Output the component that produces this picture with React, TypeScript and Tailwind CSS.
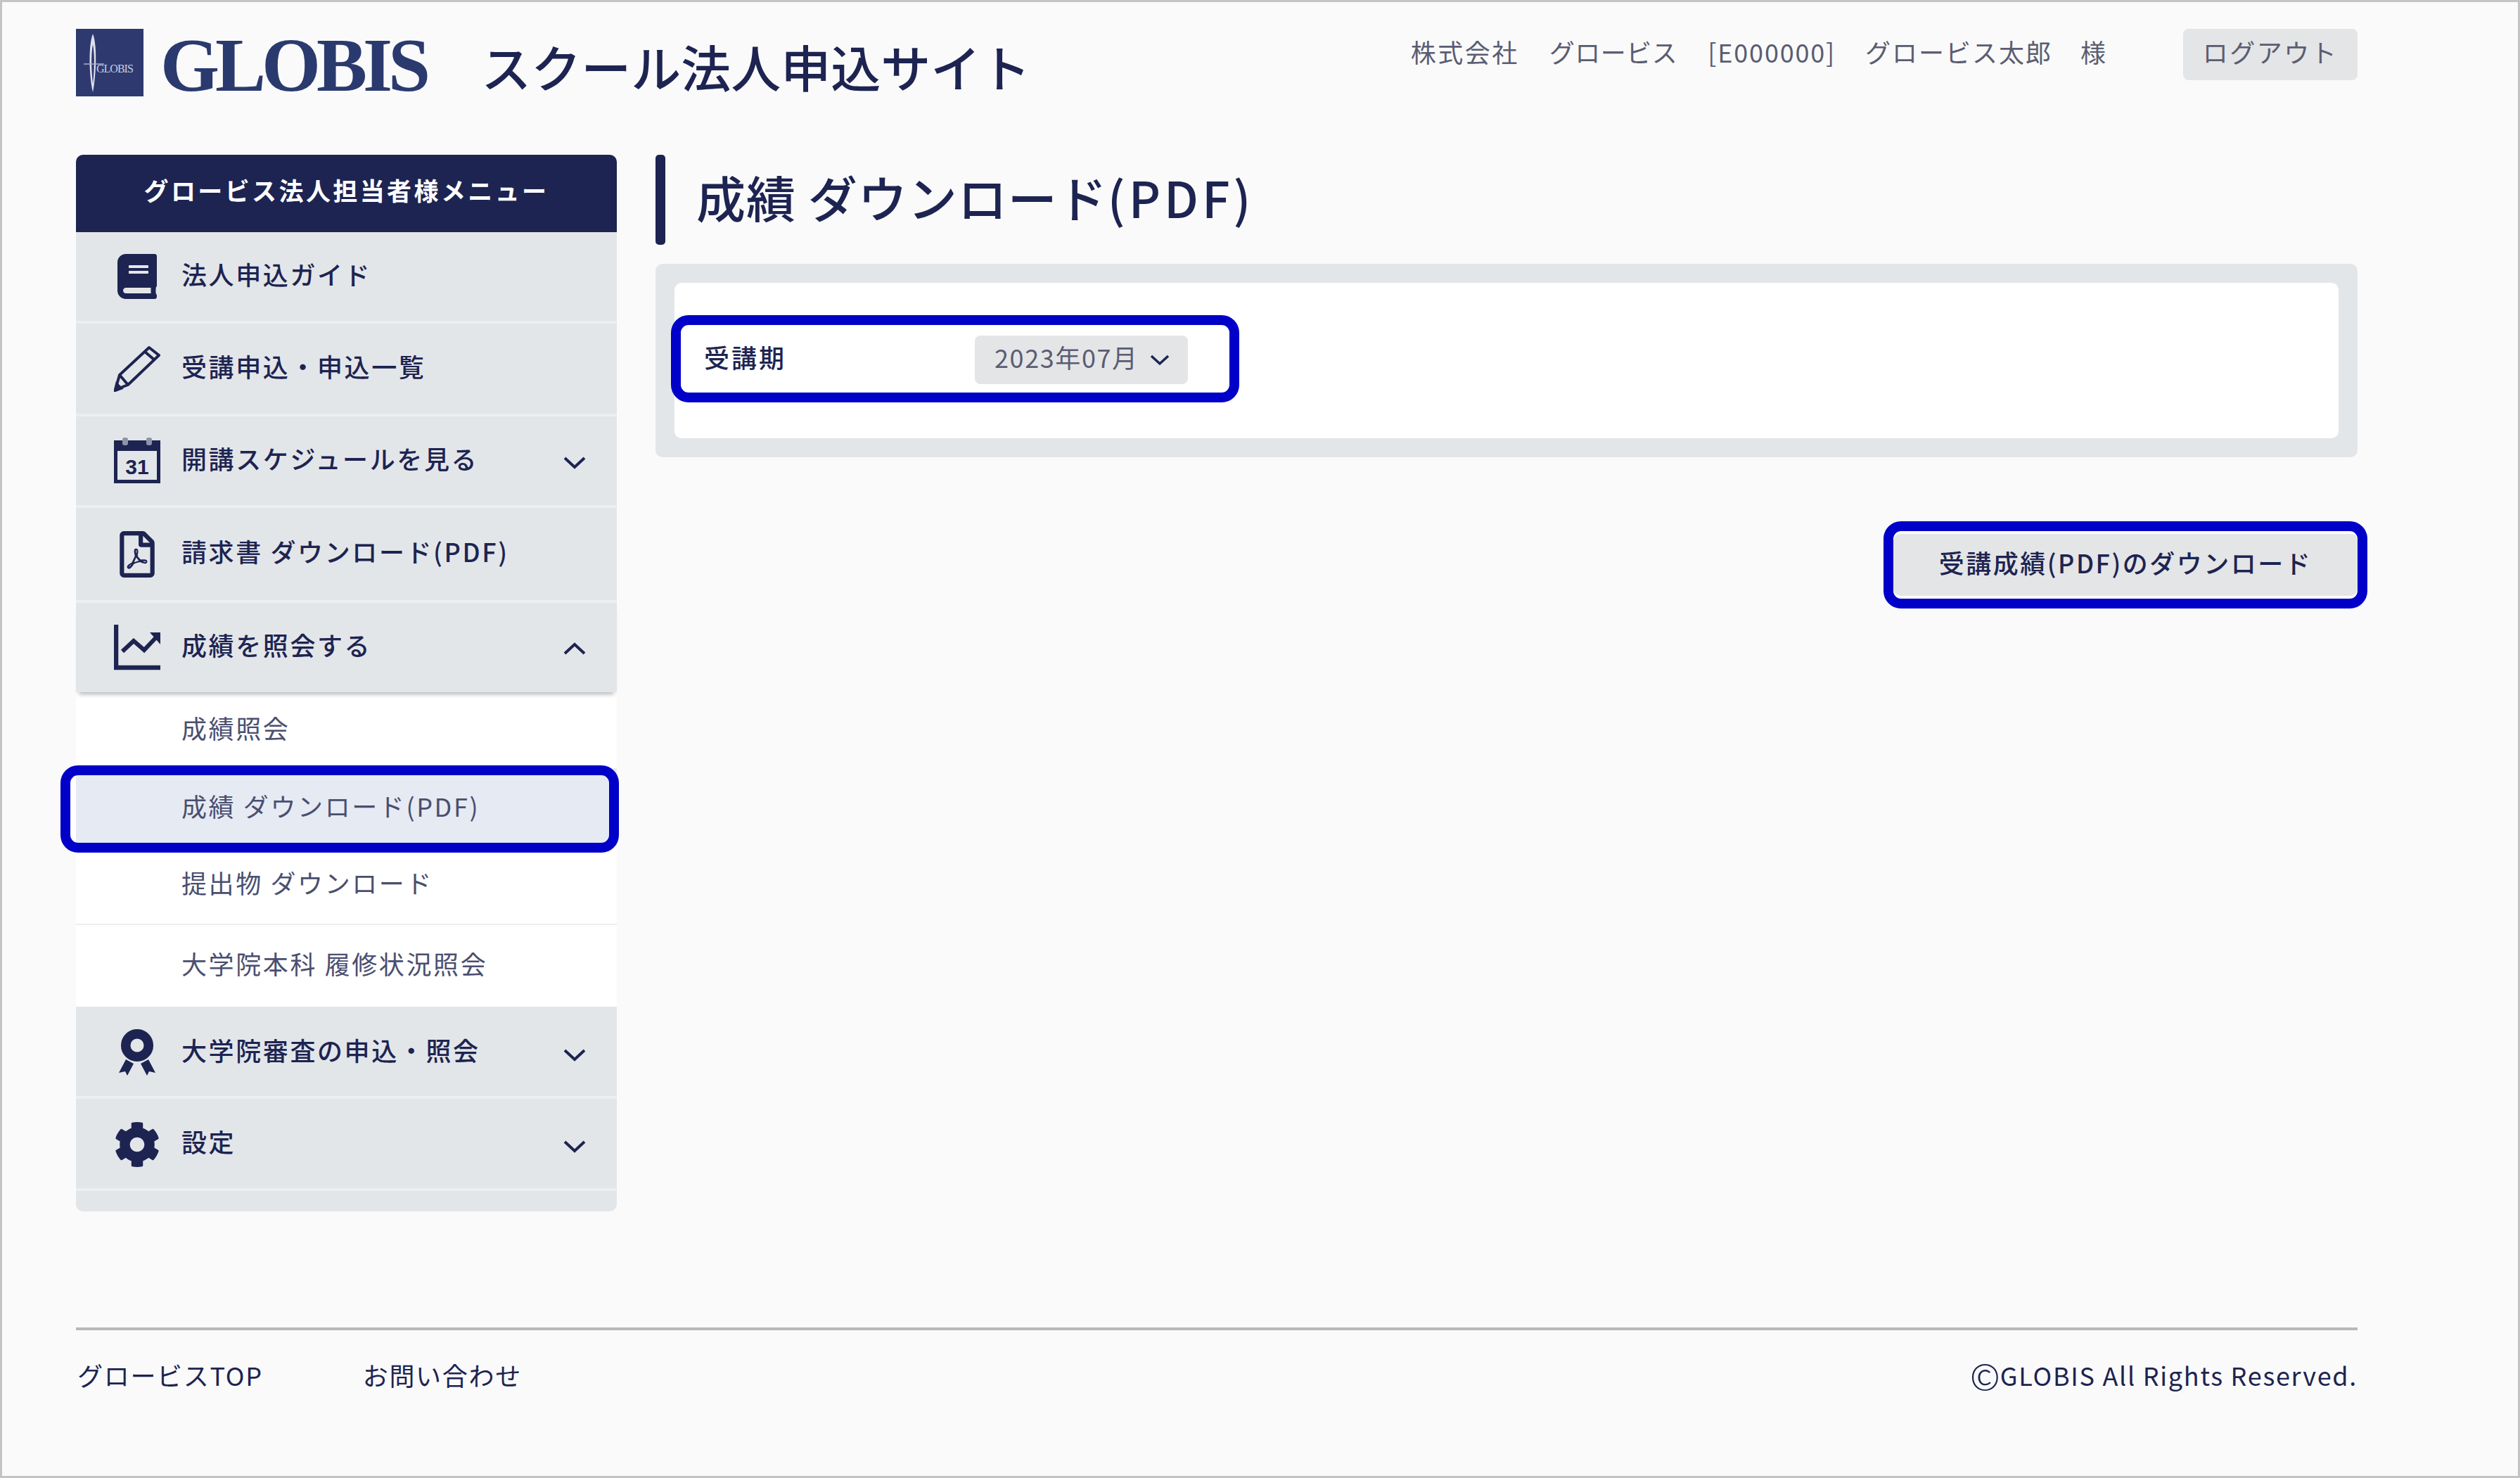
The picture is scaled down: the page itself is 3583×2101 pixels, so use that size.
import { FaBook, FaRegFilePdf, FaCog } from 'react-icons/fa'
import type { ReactNode } from 'react'

const navy = '#1d2451'

function Chevron({ up }: { up?: boolean }) {
  return (
    <svg width="32" height="18" viewBox="0 0 32 18" fill="none" stroke="#1d2451" strokeWidth="4" className={`shrink-0 ${up ? 'mt-[2px]' : 'mt-[6px]'}`}>
      <path d={up ? 'M2 16 L16 3 L30 16' : 'M2 2 L16 15 L30 2'} />
    </svg>
  )
}

function PencilIcon() {
  return (
    <svg width="66" height="66" viewBox="0 0 66 66" fill="none" stroke={navy} strokeWidth="4">
      <path d="M50 3 L64 14 L20 56 L2 63 L8 42 Z" strokeLinejoin="round" />
      <path d="M44 9 L58 21 M8 42 L20 56" />
      <path d="M2 64 L4 55 L10 61 Z" fill={navy} />
    </svg>
  )
}

function CalendarIcon() {
  return (
    <svg width="66" height="66" viewBox="0 0 66 66">
      <path d="M0 4 H66 V65 H0 Z M5 19 V60 H61 V19 Z" fill={navy} fillRule="evenodd" />
      <rect x="12" y="0" width="8" height="11" rx="3" fill="#8e93aa" />
      <rect x="46" y="0" width="8" height="11" rx="3" fill="#8e93aa" />
      <text x="33" y="52" textAnchor="middle" fontFamily="Liberation Sans" fontWeight="700" fontSize="30" fill={navy}>31</text>
    </svg>
  )
}

function ChartIcon() {
  return (
    <svg width="66" height="66" viewBox="0 0 66 66" fill="none" stroke={navy}>
      <path d="M3 0 V61 H66" strokeWidth="6.5" />
      <path d="M12 38 L28 23 L43 36 L60 18" strokeWidth="6" />
      <path d="M51 11 L66 11 L66 28 Z" fill={navy} stroke="none" />
    </svg>
  )
}

function AwardIcon() {
  return (
    <svg width="52" height="67" viewBox="0 0 52 67">
      <circle cx="26" cy="23" r="16.3" fill="none" stroke={navy} strokeWidth="13.5" />
      <path d="M10 43 L21 49 L12 66 L9 60 L0 62 Z M42 43 L31 49 L40 66 L43 60 L52 62 Z" fill={navy} />
    </svg>
  )
}

function LogoMark() {
  return (
    <svg width="96" height="96" viewBox="0 0 96 96" className="shrink-0">
      <rect width="96" height="96" fill="#2e3a6f" />
      <path d="M24 7 C31 25 28 70 24 90 C19 70 17 25 24 7 Z" fill="#dfe2ee" />
      <path d="M24 22 C27 38 26 60 24 78 C22 60 21 38 24 22 Z" fill="#2e3a6f" />
      <path d="M11 50 H40" stroke="#aab0cb" strokeWidth="1.5" />
      <text x="29" y="62" fontFamily="Liberation Serif" fontSize="16" letterSpacing="-1" fill="#c9cde0">GLOBIS</text>
    </svg>
  )
}

function MenuRow({ icon, label, chevron, className }: { icon: ReactNode; label: string; chevron?: 'up' | 'down'; className: string }) {
  return (
    <div className={`flex items-center bg-[#e3e6e9] pl-[54px] pr-[44px] ${className}`}>
      <div className="w-[66px] h-[66px] flex items-center justify-center shrink-0 text-[#1d2451]">{icon}</div>
      <span className="ml-[30px] flex-1 pb-[9px] text-[36px] tracking-[2.6px] font-medium text-[#1d2451] leading-none">{label}</span>
      {chevron && <Chevron up={chevron === 'up'} />}
    </div>
  )
}

function SubRow({ label, className, selected }: { label: string; className: string; selected?: boolean }) {
  return (
    <div className={`relative flex items-center pl-[150px] pb-[9px] text-[36px] tracking-[2.6px] text-[#4a4f70] leading-none ${selected ? 'bg-[#e6eaf3]' : 'bg-white'} ${className}`}>
      {selected && (
        <>
          <div className="absolute -left-[8px] w-[8px] inset-y-0 bg-white" />
          <div className="absolute -left-[22px] -right-[3px] -top-[4px] -bottom-[9px] border-[14px] border-[#0000c8] rounded-[25px] pointer-events-none" />
        </>
      )}
      {label}
    </div>
  )
}

export default function App() {
  return (
    <div className="w-[3583px] h-[2101px] border-[3px] border-[#c4c4c4] bg-[#fafafa] pl-[105px] pr-[228px] flex flex-col font-['Noto_Sans_CJK_JP','Noto_Sans',sans-serif] text-[#1d2451]">
      {/* header */}
      <header className="flex items-start pt-[38px] h-[217px] shrink-0">
        <LogoMark />
        <span className="ml-[24px] mt-[-4px] font-['Liberation_Serif',serif] font-bold text-[108px] leading-[112px] tracking-[-6px] text-[#2b3a6e]">GLOBIS</span>
        <span className="ml-[78px] mt-[17px] text-[71px] leading-[70px] font-medium">スクール法人申込サイト</span>
        <div className="ml-auto flex items-center h-[73px] text-[36px] text-[#5a5d72] leading-none">
          <div className="flex pb-[9px]">
            <span className="tracking-[2.5px]">株式会社</span>
            <span className="ml-[43px] tracking-[0.5px]">グロービス</span>
            <span className="ml-[43px] tracking-[1.8px]">[E000000]</span>
            <span className="ml-[42px] tracking-[2px]">グロービス太郎</span>
            <span className="ml-[40px]">様</span>
          </div>
          <button className="ml-[110px] w-[248px] h-[73px] pb-[9px] rounded-[8px] bg-[#e4e5e7] text-[#5a5d72] tracking-[2.5px]">ログアウト</button>
        </div>
      </header>

      <div className="flex items-start h-[1667px] shrink-0">
        {/* side menu */}
        <aside className="w-[769px] shrink-0 flex flex-col rounded-[10px] bg-[#e3e6e9] pb-[29px]">
          <div className="h-[110px] pb-[9px] rounded-t-[10px] bg-[#1d2451] text-white font-bold text-[35px] tracking-[3.4px] flex items-center justify-center">グロービス法人担当者様メニュー</div>
          <MenuRow className="h-[130px] border-b-[4px] border-[#eceef1]" icon={<FaBook size={64} />} label="法人申込ガイド" />
          <MenuRow className="h-[132px] border-b-[4px] border-[#eceef1]" icon={<PencilIcon />} label="受講申込・申込一覧" />
          <MenuRow className="h-[130px] border-b-[4px] border-[#eceef1]" icon={<CalendarIcon />} label="開講スケジュールを見る" chevron="down" />
          <MenuRow className="h-[135px] border-b-[4px] border-[#eceef1]" icon={<FaRegFilePdf size={66} />} label="請求書 ダウンロード(PDF)" />
          <MenuRow className="h-[127px] relative z-10 shadow-[0_7px_6px_-4px_rgba(0,0,0,0.28)]" icon={<ChartIcon />} label="成績を照会する" chevron="up" />
          <SubRow className="h-[108px]" label="成績照会" />
          <SubRow className="h-[111px] pt-[3px] z-10" label="成績 ダウンロード(PDF)" selected />
          <SubRow className="h-[112px] border-b-[2px] border-[#eceef0]" label="提出物 ダウンロード" />
          <SubRow className="h-[116px]" label="大学院本科 履修状況照会" />
          <MenuRow className="h-[131px] pt-[4px] border-b-[4px] border-[#eceef1]" icon={<AwardIcon />} label="大学院審査の申込・照会" chevron="down" />
          <MenuRow className="h-[131px] pt-[2px] border-b-[4px] border-[#eceef1]" icon={<FaCog size={66} />} label="設定" chevron="down" />
        </aside>

        {/* main */}
        <main className="ml-[55px] flex-1 flex flex-col">
          <div className="flex items-center h-[128px]">
            <div className="w-[14px] h-full rounded-[5px] bg-[#1d2451]" />
            <h1 className="ml-[44px] pb-[9px] text-[70px] tracking-[1px] leading-none font-medium">
              成績 ダウンロード<span className="tracking-[5px]">(PDF)</span>
            </h1>
          </div>

          <div className="mt-[27px] h-[275px] rounded-[10px] bg-[#e3e6e9] p-[27px]">
            <div className="h-full rounded-[10px] bg-white pl-[42px] pt-[75px]">
              <div className="relative inline-flex items-center h-[69px] w-[688px]">
                <div className="absolute -left-[47px] -right-[73px] -top-[29px] -bottom-[26px] border-[14px] border-[#0000c8] rounded-[25px] pointer-events-none" />
                <span className="w-[385px] pb-[9px] text-[36px] tracking-[3px] font-medium leading-none">受講期</span>
                <div className="flex-1 h-full rounded-[8px] bg-[#e4e5e7] flex items-center pl-[28px] text-[36px] tracking-[1.6px] text-[#5a5d72] leading-none">
                  <span className="pb-[9px]">2023年07月</span>
                  <svg width="28" height="16" viewBox="0 0 28 16" fill="none" stroke="#1d2451" strokeWidth="3.5" className="ml-[16px]">
                    <path d="M2 2 L14 13 L26 2" />
                  </svg>
                </div>
              </div>
            </div>
          </div>

          <div className="mt-[91px] -mr-[14px] flex justify-end">
            <div className="border-[14px] border-[#0000c8] rounded-[25px] bg-white py-[4px]">
              <button className="block w-[660px] h-[88px] pb-[8px] rounded-[10px] bg-[#e4e5e7] text-[36px] tracking-[2.5px] font-medium leading-none">受講成績(PDF)のダウンロード</button>
            </div>
          </div>
        </main>
      </div>

      {/* footer */}
      <footer className="border-t-[4px] border-[#b8b8b8] flex justify-between items-center pt-[45px] text-[36px] tracking-[1.7px] leading-none">
        <div className="flex pl-[2px]">
          <span>グロービスTOP</span>
          <span className="ml-[142px]">お問い合わせ</span>
        </div>
        <span className="flex items-center">
          <span className="text-[52px] leading-[36px] font-light tracking-normal">©</span>
          <span>GLOBIS All Rights Reserved.</span>
        </span>
      </footer>
    </div>
  )
}
